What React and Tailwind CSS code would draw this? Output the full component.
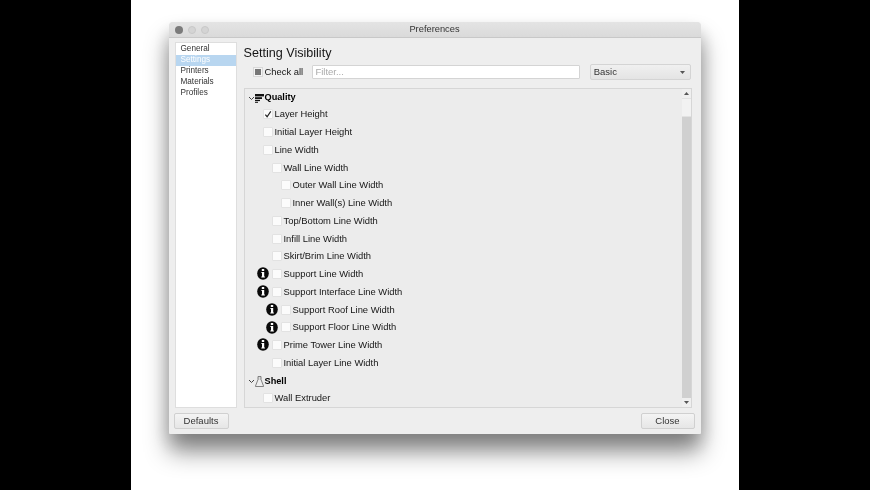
import React from "react";

const F = { fontFamily: '"Liberation Sans", Arial, sans-serif' };

function Info() {
  return (
    <svg width="12" height="13" viewBox="0 0 12 13" className="shrink-0">
      <ellipse cx="6" cy="6.5" rx="5.8" ry="6.2" fill="#0a0a0a" />
      <rect x="4.8" y="2" width="2.4" height="2" fill="#fff" />
      <path d="M4.4 4.9h2.8v4.6h.7v1.1H4.3V9.5H5V5.9h-.6z" fill="#fff" />
    </svg>
  );
}

function Chevron() {
  return (
    <svg width="7" height="5" viewBox="0 0 7 5" className="shrink-0">
      <path d="M1 1l2.5 2.5L6 1" fill="none" stroke="#444" strokeWidth="1" />
    </svg>
  );
}

function Box({ checked }) {
  return (
    <div className="w-[10px] h-[10px] shrink-0 bg-[#fbfbfb] border border-[#e2e2e2] rounded-[1px] flex items-center justify-center">
      {checked && (
        <svg width="9" height="9" viewBox="0 0 9 9">
          <path d="M1.5 4.6l2 2.4L7.6 1" fill="none" stroke="#222" strokeWidth="1.3" />
        </svg>
      )}
    </div>
  );
}

function Row({ level, label, checked, info }) {
  const pad = level === 0 ? "pl-[18px]" : level === 1 ? "pl-[27px]" : "pl-[36px]";
  return (
    <div className={`relative h-[17.75px] flex items-center gap-[2px] ${pad}`}>
      {info && (
        <div className={`absolute top-[2px] ${level === 2 ? "left-[21.5px]" : "left-[12.5px]"}`}>
          <Info />
        </div>
      )}
      <Box checked={checked} />
      <span className="text-[9.4px] text-[#151515] whitespace-nowrap">{label}</span>
    </div>
  );
}

function Category({ icon, label, h }) {
  return (
    <div className={`${h} flex items-center pl-[3px]`}>
      <Chevron />
      <div className="w-[9px] flex justify-center">{icon}</div>
      <span className="text-[9.2px] font-bold text-[#000] ml-[1px]">{label}</span>
    </div>
  );
}

const qualityIcon = (
  <svg width="9" height="9" viewBox="0 0 9 9">
    <rect x="0" y="0" width="9" height="2.4" fill="#111" />
    <rect x="0" y="3.2" width="7" height="1.8" fill="#111" />
    <rect x="0" y="5.8" width="5" height="1.3" fill="#111" />
    <rect x="0" y="7.8" width="3" height="1" fill="#111" />
  </svg>
);

const shellIcon = (
  <svg width="9" height="11" viewBox="0 0 9 11">
    <path d="M3 .5h3v3l2.5 6.5v.5H.5V10L3 3.5z" fill="#eee" stroke="#666" strokeWidth="0.8" />
    <path d="M3.7 1v3M5.3 1v3" stroke="#999" strokeWidth="0.5" />
  </svg>
);

const rows = [
  [0, "Layer Height", true],
  [0, "Initial Layer Height"],
  [0, "Line Width"],
  [1, "Wall Line Width"],
  [2, "Outer Wall Line Width"],
  [2, "Inner Wall(s) Line Width"],
  [1, "Top/Bottom Line Width"],
  [1, "Infill Line Width"],
  [1, "Skirt/Brim Line Width"],
  [1, "Support Line Width", false, true],
  [1, "Support Interface Line Width", false, true],
  [2, "Support Roof Line Width", false, true],
  [2, "Support Floor Line Width", false, true],
  [1, "Prime Tower Line Width", false, true],
  [1, "Initial Layer Line Width"],
];

function Btn({ children, w }) {
  return (
    <button className={`${w} h-[16px] bg-gradient-to-b from-[#f4f4f4] to-[#e6e6e6] border border-[#d0d0d0] rounded-[2px] text-[9.5px] text-[#333] flex items-center justify-center`}>
      {children}
    </button>
  );
}

export default function App() {
  return (
    <div className="w-[870px] h-[490px] bg-black flex justify-center overflow-hidden" style={F}>
      <div className="w-[608px] h-full bg-white ml-[-1px] pt-[22px] pl-[38px] overflow-hidden">
        <div className="w-[532px] h-[412px] bg-[#eeeeee] rounded-t-[4px] rounded-b-[1px] flex flex-col shadow-[0_18px_24px_rgba(0,0,0,0.42),0_10px_18px_rgba(0,0,0,0.18)] blur-[0.3px]">
          {/* title bar */}
          <div className="h-[16px] relative flex items-center justify-center bg-gradient-to-b from-[#e4e4e4] to-[#dadada] border-b border-[#c8c8c8] rounded-t-[4px] shrink-0">
            <div className="absolute left-[6px] top-[3.5px] flex gap-[5px]">
              <div className="w-[8px] h-[8px] rounded-full bg-[#7b7b7b]" />
              <div className="w-[8px] h-[8px] rounded-full bg-[#d4d4d4] border border-[#c8c8c8]" />
              <div className="w-[8px] h-[8px] rounded-full bg-[#d4d4d4] border border-[#c8c8c8]" />
            </div>
            <span className="text-[9.3px] text-[#333] mt-[1px]">Preferences</span>
          </div>
          {/* body */}
          <div className="flex-1 flex gap-[7px] pl-[6px] pr-[9px] pt-[4px] min-h-0">
            {/* sidebar */}
            <div className="w-[62px] h-[366px] bg-white border border-[#dedede] pt-[1px] shrink-0">
              {["General", "Settings", "Printers", "Materials", "Profiles"].map((t) => (
                <div
                  key={t}
                  className={`h-[10.9px] leading-[10.9px] pl-[5px] text-[8.2px] ${t === "Settings" ? "bg-[#b8d6f0] text-white" : "text-[#333]"}`}
                >
                  {t}
                </div>
              ))}
            </div>
            {/* main */}
            <div className="flex-1 flex flex-col min-w-0">
              <div className="h-[14px] text-[12.6px] leading-[14px] text-[#151515] mt-[4px]">Setting Visibility</div>
              <div className="flex items-center h-[16px] mt-[4px] pl-[9px]">
                <div className="w-[10px] h-[10px] bg-[#f4f4f4] border border-[#d8d8d8] flex items-center justify-center shrink-0">
                  <div className="w-[6px] h-[6px] bg-[#777]" />
                </div>
                <span className="text-[9.4px] text-[#151515] ml-[2px] w-[48px]">Check all</span>
                <div className="w-[268px] h-[14px] bg-white border border-[#d4d4d4] rounded-[1px] text-[9.5px] text-[#aaa] pl-[2px] leading-[12px]">
                  Filter...
                </div>
                <div className="w-[102px] h-[16px] ml-[10px] bg-gradient-to-b from-[#f0f0f0] to-[#e4e4e4] border border-[#d4d4d4] rounded-[2px] flex items-center justify-between pl-[3px] pr-[5px] text-[9.5px] text-[#333]">
                  <span>Basic</span>
                  <svg width="5" height="3" viewBox="0 0 5 3"><path d="M0 0h5L2.5 3z" fill="#555" /></svg>
                </div>
              </div>
              {/* tree */}
              <div className="w-[448px] h-[320px] mt-[8px] border border-[#d6d6d6] bg-[#ececec] flex overflow-hidden">
                <div className="flex-1 pt-[2px] min-w-0">
                  <Category h="h-[14.5px]" icon={qualityIcon} label="Quality" />
                  {rows.map(([l, t, c, i]) => (
                    <Row key={t} level={l} label={t} checked={c} info={i} />
                  ))}
                  <div className="h-[2.2px]" />
                  <Category h="h-[15px]" icon={shellIcon} label="Shell" />
                  <Row level={0} label="Wall Extruder" />
                </div>
                {/* scrollbar */}
                <div className="w-[9px] flex flex-col shrink-0 bg-[#d0d0d0]">
                  <div className="h-[9px] bg-[#efefef] flex items-center justify-center">
                    <svg width="5" height="3" viewBox="0 0 5 3"><path d="M0 3h5L2.5 0z" fill="#555" /></svg>
                  </div>
                  <div className="h-[19px] bg-[#f2f2f2] border-y border-[#e2e2e2]" />
                  <div className="flex-1" />
                  <div className="h-[9px] bg-[#efefef] flex items-center justify-center">
                    <svg width="5" height="3" viewBox="0 0 5 3"><path d="M0 0h5L2.5 3z" fill="#555" /></svg>
                  </div>
                </div>
              </div>
            </div>
          </div>
          {/* footer */}
          <div className="h-[26px] flex items-start justify-between pl-[5px] pr-[6px] pt-[5px] shrink-0">
            <Btn w="w-[55px]">Defaults</Btn>
            <Btn w="w-[54px]">Close</Btn>
          </div>
        </div>
      </div>
    </div>
  );
}
